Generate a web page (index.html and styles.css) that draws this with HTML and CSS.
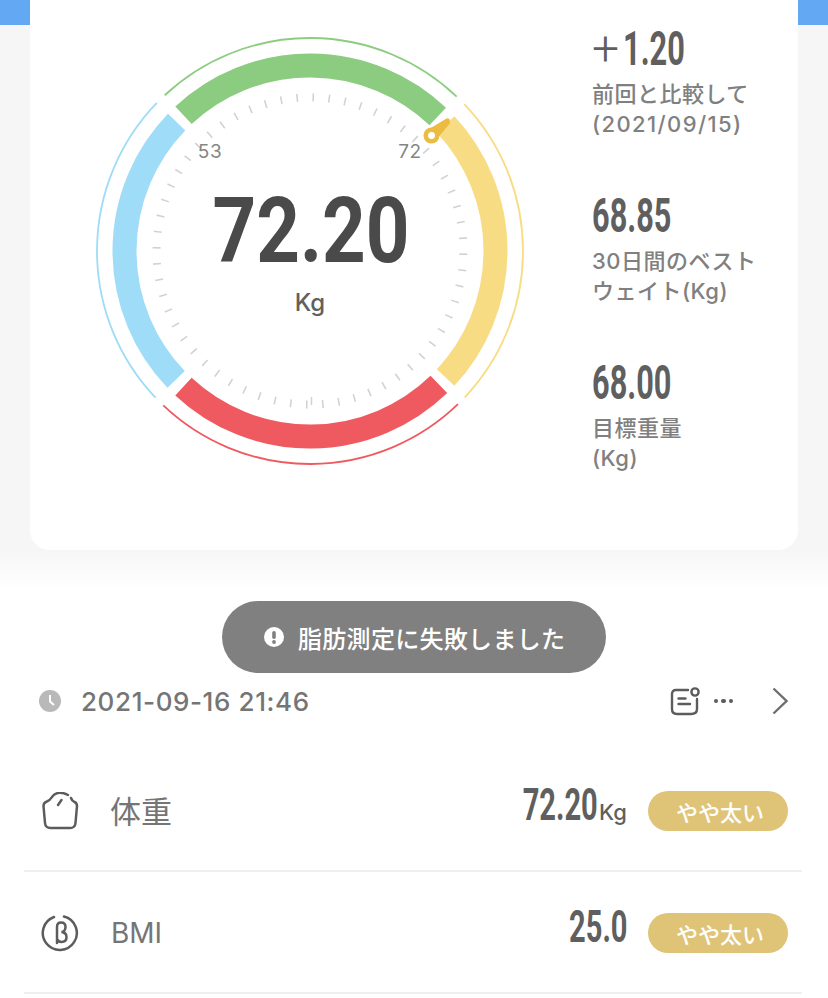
FILE: index.html
```html
<!DOCTYPE html>
<html lang="ja">
<head>
    <meta charset="UTF-8">
    <title>体重</title>
    <link rel="stylesheet" href="styles.css">
</head>
<body>
<div class="page">
    <div class="hero">
        <div class="card">
            <!-- gauge: rings are circles cut up with dasharray, pathLength = degrees -->
            <svg class="gauge" width="440" height="440" viewBox="0 0 440 440">
                <g class="ring">
                    <circle cx="220" cy="220" r="213" pathLength="360" stroke="#8ccc80" stroke-dasharray="86.500 273.500" transform="rotate(-133 220 220)"/>
                    <circle cx="220" cy="220" r="213" pathLength="360" stroke="#f8dc84" stroke-dasharray="87 273" transform="rotate(-43.6 220 220)"/>
                    <circle cx="220" cy="220" r="213" pathLength="360" stroke="#ef5a60" stroke-dasharray="87.500 272.500" transform="rotate(46 220 220)"/>
                    <circle cx="220" cy="220" r="213" pathLength="360" stroke="#9edcf7" stroke-dasharray="87.500 272.500" transform="rotate(136.5 220 220)"/>
                </g>
                <g class="band">
                    <circle cx="220" cy="220" r="185.500" pathLength="360" stroke="#8ccc80" stroke-dasharray="86.500 273.500" transform="rotate(-133 220 220)"/>
                    <circle cx="220" cy="220" r="185.500" pathLength="360" stroke="#f8dc84" stroke-dasharray="86 274" transform="rotate(-43 220 220)"/>
                    <circle cx="220" cy="220" r="185.500" pathLength="360" stroke="#ef5a60" stroke-dasharray="87 273" transform="rotate(46 220 220)"/>
                    <circle cx="220" cy="220" r="185.500" pathLength="360" stroke="#9edcf7" stroke-dasharray="87.800 272.200" transform="rotate(136.2 220 220)"/>
                </g>
                <circle class="ticks" cx="220" cy="220" r="153.500" pathLength="60" stroke-dasharray="0.1 0.9" transform="rotate(-89.1 220 220)"/>
                <line class="tick-extra" x1="221.500" y1="366" x2="221.500" y2="374"/>
                <path class="needle" d="M335 100.500 L356.500 87.500 Q358.500 86.500 359.500 88.500 L360 91 Q360 92.500 358.500 94 L348.500 106 Z"/>
                <circle class="needle" cx="341.500" cy="104.500" r="8"/>
                <circle cx="341.500" cy="104.500" r="3.500" fill="#fff"/>
                <text class="tick-label" x="120" y="127" text-anchor="middle">53</text>
                <text class="tick-label" x="320" y="127" text-anchor="middle">72</text>
                <text class="gauge-value" x="221" y="231" text-anchor="middle" textLength="197" lengthAdjust="spacingAndGlyphs">72.20</text>
                <text class="gauge-unit" x="220" y="280" text-anchor="middle">Kg</text>
            </svg>

            <div class="side">
                <div class="stat">
                    <div class="stat-num"><span class="plus">+</span><span class="narrow">1.20</span></div>
                    <div class="stat-label">前回と比較して<br><span class="label-date">(2021/09/15)</span></div>
                </div>
                <div class="stat">
                    <div class="stat-num"><span class="narrow">68.85</span></div>
                    <div class="stat-label">30日間のベスト<br>ウェイト(Kg)</div>
                </div>
                <div class="stat">
                    <div class="stat-num"><span class="narrow">68.00</span></div>
                    <div class="stat-label">目標重量<br>(Kg)</div>
                </div>
            </div>
        </div>
    </div>

    <div class="toast">
        <svg width="20" height="20" viewBox="0 0 20 20">
            <circle cx="10" cy="10" r="10" fill="#fff"/>
            <rect x="8.200" y="4" width="3.600" height="8" rx="1.800" fill="#808080"/>
            <circle cx="10" cy="15" r="1.900" fill="#808080"/>
        </svg>
        <span>脂肪測定に失敗しました</span>
    </div>

    <div class="date-row">
        <svg width="22" height="22" viewBox="0 0 22 22">
            <circle cx="11" cy="11" r="11" fill="#b9b9b9"/>
            <path d="M11 5 V11.500 L15 15" fill="none" stroke="#fff" stroke-width="2"/>
        </svg>
        <span class="date">2021-09-16 21:46</span>
        <svg class="note" width="30" height="30" viewBox="0 0 30 30" fill="none" stroke="#5c5c5c" stroke-width="2.400" stroke-linecap="round">
            <path d="M18 4 H6 Q2 4 2 8 V23 Q2 28 7 28 H21 Q27 28 27 23 V13"/>
            <circle cx="25" cy="6" r="3.600"/>
            <path d="M8.500 12.500 H15.500 M8.500 18 H20"/>
        </svg>
        <span class="dots"><i></i><i></i><i></i></span>
        <svg class="chevron" width="16" height="28" viewBox="0 0 16 28" fill="none" stroke="#6e6e6e" stroke-width="2.400">
            <path d="M1.500 1.500 L14.500 14 L1.500 26.500"/>
        </svg>
    </div>

    <div class="list">
        <div class="row">
            <svg class="row-icon" width="38" height="38" viewBox="0 0 38 38" fill="none" stroke="#5c5c5c" stroke-width="2.500" stroke-linecap="round">
                <path d="M27 3 Q23 0.800 19 0.800 Q14 0.800 11 5 Q9 8.500 5 10 Q2.500 11 2.500 14 L4 31 Q4.500 36 9.500 36 H29 Q34 36 34.500 31 L36 14 Q36 11 33.500 10 Q31 9 30 6"/>
                <path d="M17 13 L20.500 8"/>
            </svg>
            <span class="row-name row-name-ja">体重</span>
            <span class="row-value"><span class="narrow-small">72.20</span><span class="unit">Kg</span></span>
            <span class="badge">やや太い</span>
        </div>
        <div class="row">
            <svg class="row-icon" width="38" height="38" viewBox="0 0 38 38" fill="none" stroke="#5c5c5c" stroke-width="2.500" stroke-linecap="round">
                <path d="M23 2.500 A17 17 0 1 1 13 3"/>
                <path d="M16 29 V13 Q16 8.500 20 8.500 Q24.500 8.500 24.500 13 Q24.500 17.500 20.500 18 Q25.500 18.500 25.500 23 Q25.500 28 20.500 28 Q17 28 16 25"/>
            </svg>
            <span class="row-name">BMI</span>
            <span class="row-value"><span class="narrow-small">25.0</span></span>
            <span class="badge">やや太い</span>
        </div>
    </div>
</div>
</body>
</html>
```

FILE: styles.css
```css
* {
    box-sizing: border-box;
}

body {
    margin: 0;
    background: #fff;
    font-family: Inter, "Noto Sans CJK JP", sans-serif;
}

.page {
    position: relative;
    width: 828px;
    height: 998px;
    overflow: hidden;
}

/* blue strip at the top, grey fading to white behind the card */
.hero {
    height: 590px;
    padding: 0 30px;
    background:
        linear-gradient(#63a8f2 0, #63a8f2 25px, transparent 25px),
        linear-gradient(#f6f6f6 0, #f6f6f6 550px, #fff 590px);
}

.card {
    display: flex;
    height: 550px;
    padding: 31px 0 0 60px;
    background: #fff;
    border-radius: 0 0 20px 20px;
}

.ring circle {
    fill: none;
    stroke-width: 1.800;
}

.band circle {
    fill: none;
    stroke-width: 24px;
}

.ticks {
    fill: none;
    stroke: #d2d2d2;
    stroke-width: 8px;
}

.tick-extra {
    stroke: #d2d2d2;
    stroke-width: 1.500;
}

.needle {
    fill: #ebbb42;
}

.tick-label {
    font-size: 19px;
    letter-spacing: 0.5px;
    fill: #858585;
}

.gauge-value {
    font-family: Roboto, sans-serif;
    font-size: 90px;
    font-weight: 700;
    fill: #4a4a4a;
}

.gauge-unit {
    font-size: 24px;
    font-weight: 500;
    fill: #606060;
}

.side {
    display: flex;
    flex-direction: column;
    margin-left: 62px;
    margin-top: -31px;
    padding-top: 29px;
    gap: 45px;
}

.stat {
    height: 122px;
}

.narrow,
.narrow-small {
    display: inline-block;
    font-family: Roboto, sans-serif;
    font-weight: 700;
    color: #5f5f5f;
    white-space: nowrap;
}

.narrow {
    font-size: 48px;
    line-height: 40px;
    transform: scaleX(0.64);
    transform-origin: left center;
}

/* the value boxes keep their wide layout size, so scale from the right */
.narrow-small {
    font-size: 44px;
    line-height: 40px;
    transform: scaleX(0.66);
    transform-origin: right center;
}

.plus {
    display: inline-block;
    width: 31px;
    font-family: Roboto, sans-serif;
    font-size: 48px;
    font-weight: 300;
    line-height: 40px;
    color: #5f5f5f;
}

.stat-num {
    display: flex;
    align-items: center;
    height: 40px;
}

.stat-label {
    margin-top: 10px;
    font-size: 22px;
    font-weight: 500;
    line-height: 30px;
    letter-spacing: 0.5px;
    color: #808080;
}

.label-date {
    letter-spacing: 1.400px;
}

.toast {
    position: absolute;
    top: 601px;
    left: 222px;
    display: flex;
    align-items: center;
    gap: 14px;
    width: 384px;
    height: 72px;
    padding-left: 42px;
    background: #808080;
    border-radius: 36px;
    color: #fff;
    font-family: "Noto Sans CJK JP", sans-serif;
    font-size: 24px;
    font-weight: 500;
    letter-spacing: 0.3px;
}

.date-row {
    display: flex;
    align-items: center;
    height: 42px;
    margin-top: 90px;
    padding-left: 39px;
}

.date {
    margin-left: 20px;
    font-size: 26px;
    font-weight: 500;
    letter-spacing: 0.600px;
    color: #757575;
}

.note {
    margin-left: auto;
}

.dots {
    display: flex;
    gap: 3px;
    margin-left: 14px;
}

.dots i {
    width: 4.500px;
    height: 4.500px;
    border-radius: 50%;
    background: #5c5c5c;
}

.chevron {
    margin: 0 40px 0 39px;
}

.list {
    margin: 28px 26px 0 24px;
}

.row {
    display: flex;
    align-items: center;
    height: 122px;
    padding: 2px 14px 0 0;
    border-bottom: 2px solid #f0f0f0;
}

.row-icon {
    margin-left: 17px;
}

.row-name {
    margin-left: 32px;
    font-size: 28px;
    color: #757575;
}

.row-name-ja {
    margin-left: 31px;
    margin-bottom: 3px;
    font-size: 31px;
}

.row-value {
    display: flex;
    align-items: baseline;
    margin: 0 0 12px auto;
}

.unit {
    margin-left: 1px;
    font-size: 22px;
    font-weight: 500;
    color: #5f5f5f;
}

.badge {
    display: flex;
    align-items: center;
    justify-content: center;
    width: 140px;
    height: 40px;
    margin-left: 21px;
    padding-left: 4px;
    background: #dfc477;
    border-radius: 20px;
    color: #fff;
    font-family: "Noto Sans CJK JP", sans-serif;
    font-size: 22px;
    font-weight: 500;
}
```
